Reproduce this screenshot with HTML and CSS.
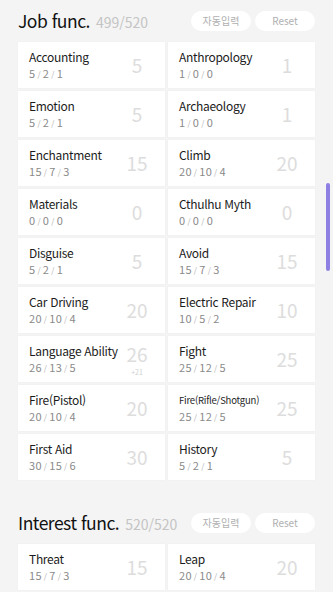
FILE: index.html
```html
<!DOCTYPE html>
<html lang="ko">
<head>
<meta charset="utf-8">
<title>Skills</title>
<link rel="stylesheet" href="styles.css">
</head>
<body>
<div class="page">
  <section class="section">
    <div class="head">
      <h2 class="title">Job func.</h2>
      <span class="points">499/520</span>
      <div class="actions">
        <button class="pill">자동입력</button>
        <button class="pill">Reset</button>
      </div>
    </div>
    <div class="grid">
      <div class="card"><div class="info"><div class="name">Accounting</div><div class="sub">5<i>/</i>2<i>/</i>1</div></div><div class="val">5</div></div>
      <div class="card"><div class="info"><div class="name">Anthropology</div><div class="sub">1<i>/</i>0<i>/</i>0</div></div><div class="val">1</div></div>
      <div class="card"><div class="info"><div class="name">Emotion</div><div class="sub">5<i>/</i>2<i>/</i>1</div></div><div class="val">5</div></div>
      <div class="card"><div class="info"><div class="name">Archaeology</div><div class="sub">1<i>/</i>0<i>/</i>0</div></div><div class="val">1</div></div>
      <div class="card"><div class="info"><div class="name">Enchantment</div><div class="sub">15<i>/</i>7<i>/</i>3</div></div><div class="val">15</div></div>
      <div class="card"><div class="info"><div class="name">Climb</div><div class="sub">20<i>/</i>10<i>/</i>4</div></div><div class="val">20</div></div>
      <div class="card"><div class="info"><div class="name">Materials</div><div class="sub">0<i>/</i>0<i>/</i>0</div></div><div class="val">0</div></div>
      <div class="card"><div class="info"><div class="name">Cthulhu Myth</div><div class="sub">0<i>/</i>0<i>/</i>0</div></div><div class="val">0</div></div>
      <div class="card"><div class="info"><div class="name">Disguise</div><div class="sub">5<i>/</i>2<i>/</i>1</div></div><div class="val">5</div></div>
      <div class="card"><div class="info"><div class="name">Avoid</div><div class="sub">15<i>/</i>7<i>/</i>3</div></div><div class="val">15</div></div>
      <div class="card"><div class="info"><div class="name">Car Driving</div><div class="sub">20<i>/</i>10<i>/</i>4</div></div><div class="val">20</div></div>
      <div class="card"><div class="info"><div class="name">Electric Repair</div><div class="sub">10<i>/</i>5<i>/</i>2</div></div><div class="val">10</div></div>
      <div class="card"><div class="info"><div class="name">Language Ability</div><div class="sub">26<i>/</i>13<i>/</i>5</div></div><div class="val val-stack"><span class="val-num">26</span><small class="val-bonus">+21</small></div></div>
      <div class="card"><div class="info"><div class="name">Fight</div><div class="sub">25<i>/</i>12<i>/</i>5</div></div><div class="val">25</div></div>
      <div class="card"><div class="info"><div class="name">Fire(Pistol)</div><div class="sub">20<i>/</i>10<i>/</i>4</div></div><div class="val">20</div></div>
      <div class="card"><div class="info"><div class="name name-small">Fire(Rifle/Shotgun)</div><div class="sub">25<i>/</i>12<i>/</i>5</div></div><div class="val">25</div></div>
      <div class="card"><div class="info"><div class="name">First Aid</div><div class="sub">30<i>/</i>15<i>/</i>6</div></div><div class="val">30</div></div>
      <div class="card"><div class="info"><div class="name">History</div><div class="sub">5<i>/</i>2<i>/</i>1</div></div><div class="val">5</div></div>
    </div>
  </section>
  <section class="section section-next">
    <div class="head">
      <h2 class="title">Interest func.</h2>
      <span class="points">520/520</span>
      <div class="actions">
        <button class="pill">자동입력</button>
        <button class="pill">Reset</button>
      </div>
    </div>
    <div class="grid">
      <div class="card"><div class="info"><div class="name">Threat</div><div class="sub">15<i>/</i>7<i>/</i>3</div></div><div class="val">15</div></div>
      <div class="card"><div class="info"><div class="name">Leap</div><div class="sub">20<i>/</i>10<i>/</i>4</div></div><div class="val">20</div></div>
    </div>
  </section>
  <div class="scrollbar"></div>
</div>
</body>
</html>
```
FILE: styles.css
```css
* { box-sizing: border-box; }
html, body {
  margin: 0;
  padding: 0;
  background: #f4f4f4;
  font-family: "Noto Sans CJK KR", "Noto Sans", sans-serif;
  overflow: hidden;
}
.page {
  position: relative;
  width: 333px;
  height: 592px;
  overflow: hidden;
}
.head {
  display: flex;
  align-items: center;
  height: 42px;
  padding: 0 18px 0 18px;
}
.section-next .head {
  margin-top: 22px;
}
.title {
  margin: 0;
  font-size: 17.5px;
  font-weight: 400;
  color: #111;
  line-height: 24px;
  letter-spacing: -0.5px;
}
.points {
  margin-left: 6px;
  font-size: 14px;
  color: #c4c4c4;
  line-height: 24px;
  padding-top: 2px;
}
.actions {
  margin-left: auto;
  display: flex;
  gap: 4px;
}
.pill {
  border: none;
  background: #fff;
  height: 20px;
  width: 60px;
  border-radius: 10px;
  font-family: inherit;
  font-size: 10px;
  color: #b0b0b0;
  padding: 0;
  line-height: 20px;
}
.grid {
  display: grid;
  grid-template-columns: 1fr 1fr;
  gap: 3px;
  padding: 0 18px;
}
.card {
  background: #fff;
  height: 46px;
  display: flex;
  align-items: center;
  padding: 0 13px 0 11px;
  box-shadow: 0 0 1px rgba(0,0,0,0.06);
}
.info {
  flex: 1;
  display: flex;
  flex-direction: column;
  min-width: 0;
}
.name {
  font-size: 12px;
  line-height: 16px;
  color: #1c1c1c;
  white-space: nowrap;
  letter-spacing: -0.3px;
}
.name-small {
  font-size: 9.5px;
  letter-spacing: -0.2px;
}
.sub {
  margin-top: 1px;
  font-size: 11px;
  line-height: 14px;
  color: #8a8a8a;
  letter-spacing: 0.3px;
}
.sub i {
  font-style: normal;
  font-size: 8px;
  color: #b0b0b0;
  margin: 0 2px;
}
.val {
  width: 30px;
  text-align: center;
  font-size: 19px;
  color: #dddddd;
  line-height: 24px;
}
.val-stack {
  display: flex;
  flex-direction: column;
  align-items: center;
  margin-top: 4px;
}
.val-num {
  line-height: 16px;
}
.val-bonus {
  margin-top: 6px;
  font-size: 7px;
  line-height: 8px;
  color: #cfcfcf;
}
.scrollbar {
  position: absolute;
  left: 326px;
  top: 183px;
  width: 4px;
  height: 88px;
  border-radius: 2px;
  background: #8d80e2;
}
```
